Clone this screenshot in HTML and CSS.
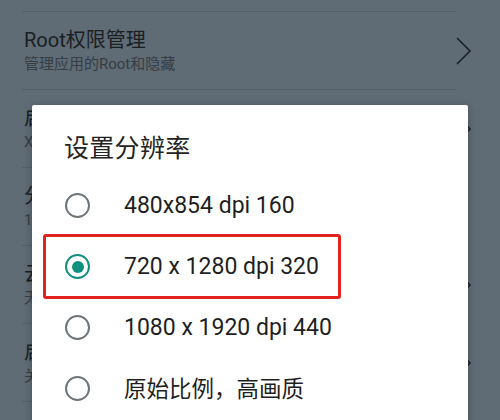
FILE: index.html
```html
<!DOCTYPE html>
<html lang="zh-CN">
<head>
<meta charset="utf-8">
<title>设置分辨率</title>
<link rel="stylesheet" href="styles.css">
</head>
<body>
<div class="screen">
  <div class="list">
    <div class="spacer"></div>
    <div class="divider"></div>
    <div class="row">
      <div class="texts">
        <div class="title">Root权限管理</div>
        <div class="sub">管理应用的Root和隐藏</div>
      </div>
      <svg class="chev" width="18" height="30" viewBox="0 0 18 30"><path d="M2 2 L15 15 L2 28" fill="none" stroke="#1b2127" stroke-width="1.6"/></svg>
    </div>
    <div class="divider"></div>
    <div class="row">
      <div class="texts">
        <div class="title">启用Xposed框架</div>
        <div class="sub">Xposed框架状态</div>
      </div>
      <svg class="chev" width="18" height="30" viewBox="0 0 18 30"><path d="M2 2 L15 15 L2 28" fill="none" stroke="#1b2127" stroke-width="1.6"/></svg>
    </div>
    <div class="divider"></div>
    <div class="row">
      <div class="texts">
        <div class="title">分辨率</div>
        <div class="sub">1080 x 1920 dpi 440</div>
      </div>
    </div>
    <div class="divider"></div>
    <div class="row">
      <div class="texts">
        <div class="title">云端同步</div>
        <div class="sub">无</div>
      </div>
      <svg class="chev" width="18" height="30" viewBox="0 0 18 30"><path d="M2 2 L15 15 L2 28" fill="none" stroke="#1b2127" stroke-width="1.6"/></svg>
    </div>
    <div class="divider"></div>
    <div class="row">
      <div class="texts">
        <div class="title">启动设置</div>
        <div class="sub">关闭</div>
      </div>
      <svg class="chev" width="18" height="30" viewBox="0 0 18 30"><path d="M2 2 L15 15 L2 28" fill="none" stroke="#1b2127" stroke-width="1.6"/></svg>
    </div>
    <div class="divider"></div>
  </div>

  <div class="dialog">
    <div class="dlg-title">设置分辨率</div>
    <div class="options">
      <div class="option">
        <span class="radio"></span>
        <span class="label">480x854 dpi 160</span>
      </div>
      <div class="option selected">
        <span class="radio on"></span>
        <span class="label">720 x 1280 dpi 320</span>
      </div>
      <div class="option">
        <span class="radio"></span>
        <span class="label">1080 x 1920 dpi 440</span>
      </div>
      <div class="option">
        <span class="radio"></span>
        <span class="label cjk">原始比例，高画质</span>
      </div>
    </div>
  </div>
</div>
</body>
</html>
```

FILE: styles.css
```css
html, body {
  margin: 0;
  padding: 0;
}
body {
  width: 500px;
  height: 420px;
  overflow: hidden;
  background: #5f6b75;
  font-family: Roboto, "Noto Sans CJK SC", sans-serif;
}
.screen {
  position: relative;
  width: 500px;
  height: 420px;
  overflow: hidden;
  background: #5f6b75;
}
.list {
  display: flex;
  flex-direction: column;
}
.spacer {
  height: 11px;
}
.divider {
  height: 1px;
  margin: 0 44px 0 22px;
  background: #566069;
}
.row {
  height: 77px;
  display: flex;
  align-items: center;
  justify-content: space-between;
  padding: 0 28px 0 24px;
}
.texts {
  display: flex;
  flex-direction: column;
  gap: 3px;
}
.title {
  font-size: 20px;
  line-height: 24px;
  color: #1a1f24;
}
.sub {
  font-size: 15px;
  line-height: 19px;
  color: #363d44;
}
.chev {
  display: block;
  margin-right: -1px;
}
.dialog {
  position: absolute;
  left: 32px;
  top: 105px;
  width: 436px;
  height: 330px;
  background: #ffffff;
  border-radius: 2px;
  box-shadow: 0 2px 8px rgba(0, 0, 0, 0.25);
}
.dlg-title {
  padding: 30px 0 0 32px;
  font-size: 25px;
  line-height: 28px;
  color: #232323;
  letter-spacing: 0.3px;
}
.options {
  margin-top: 12px;
  display: flex;
  flex-direction: column;
}
.option {
  position: relative;
  height: 61px;
  display: flex;
  align-items: center;
  padding-left: 33px;
}
.option.selected::after {
  content: "";
  position: absolute;
  left: 11px;
  top: -2px;
  width: 292px;
  height: 59px;
  border: 3px solid #e3231f;
  border-radius: 3px;
}
.radio {
  box-sizing: border-box;
  width: 25px;
  height: 25px;
  border: 2.5px solid #6e757a;
  border-radius: 50%;
  display: flex;
  align-items: center;
  justify-content: center;
  flex: none;
}
.radio.on {
  border-color: #10907e;
}
.radio.on::before {
  content: "";
  width: 12px;
  height: 12px;
  border-radius: 50%;
  background: #10907e;
}
.label {
  margin-left: 34px;
  font-size: 23px;
  line-height: 28px;
  color: #1f1f1f;
}
.label.cjk {
  font-size: 22.5px;
}
```
